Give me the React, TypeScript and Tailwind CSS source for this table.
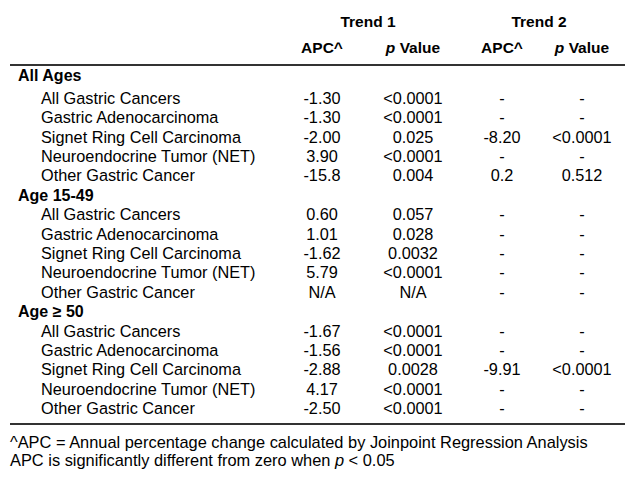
const groups = [
  {
    title: "All Ages",
    rows: [
      ["All Gastric Cancers", "-1.30", "<0.0001", "-", "-"],
      ["Gastric Adenocarcinoma", "-1.30", "<0.0001", "-", "-"],
      ["Signet Ring Cell Carcinoma", "-2.00", "0.025", "-8.20", "<0.0001"],
      ["Neuroendocrine Tumor (NET)", "3.90", "<0.0001", "-", "-"],
      ["Other Gastric Cancer", "-15.8", "0.004", "0.2", "0.512"],
    ],
  },
  {
    title: "Age 15-49",
    rows: [
      ["All Gastric Cancers", "0.60", "0.057", "-", "-"],
      ["Gastric Adenocarcinoma", "1.01", "0.028", "-", "-"],
      ["Signet Ring Cell Carcinoma", "-1.62", "0.0032", "-", "-"],
      ["Neuroendocrine Tumor (NET)", "5.79", "<0.0001", "-", "-"],
      ["Other Gastric Cancer", "N/A", "N/A", "-", "-"],
    ],
  },
  {
    title: "Age \u2265 50",
    rows: [
      ["All Gastric Cancers", "-1.67", "<0.0001", "-", "-"],
      ["Gastric Adenocarcinoma", "-1.56", "<0.0001", "-", "-"],
      ["Signet Ring Cell Carcinoma", "-2.88", "0.0028", "-9.91", "<0.0001"],
      ["Neuroendocrine Tumor (NET)", "4.17", "<0.0001", "-", "-"],
      ["Other Gastric Cancer", "-2.50", "<0.0001", "-", "-"],
    ],
  },
];

const cols = "grid grid-cols-[267px_90px_92px_86px_74px]";

export default function App() {
  return (
    <div className="w-[640px] h-[488px] bg-white text-black font-['Liberation_Sans',Arial,sans-serif] text-[16.3px]">
      <div className="ml-[10px] w-[615px] pt-[12px]">
        {/* Header */}
        <div className={`${cols} leading-[20px] font-bold text-[15.5px]`}>
          <div />
          <div className="col-span-2 text-center">Trend 1</div>
          <div className="col-span-2 text-center">Trend 2</div>
        </div>
        <div className={`${cols} leading-[20px] font-bold text-[15.5px] mt-[6px] pb-[6px] border-b-2 border-[#333]`}>
          <div />
          <div className="text-center">APC^</div>
          <div className="text-center">
            <i>p</i> Value
          </div>
          <div className="text-center">APC^</div>
          <div className="text-center">
            <i>p</i> Value
          </div>
        </div>

        {/* Body */}
        <div className="pb-[4px] border-b-2 border-[#333]">
          {groups.map((g, gi) => (
            <div key={g.title}>
              <div className={`font-bold text-[16px] leading-[19.4px] pl-[8px] ${gi === 0 ? "mb-[3.4px]" : ""}`}>
                {g.title}
              </div>
              {g.rows.map((r) => (
                <div key={r[0]} className={`${cols} leading-[19.4px]`}>
                  <div className="pl-[31px]">{r[0]}</div>
                  <div className="text-center">{r[1]}</div>
                  <div className="text-center">{r[2]}</div>
                  <div className="text-center">{r[3]}</div>
                  <div className="text-center">{r[4]}</div>
                </div>
              ))}
            </div>
          ))}
        </div>

        {/* Footnote */}
        <div className="mt-[8px] leading-[18.5px] text-[16.4px]">
          <div>^APC = Annual percentage change calculated by Joinpoint Regression Analysis</div>
          <div>
            APC is significantly different from zero when <i>p</i> &lt; 0.05
          </div>
        </div>
      </div>
    </div>
  );
}
